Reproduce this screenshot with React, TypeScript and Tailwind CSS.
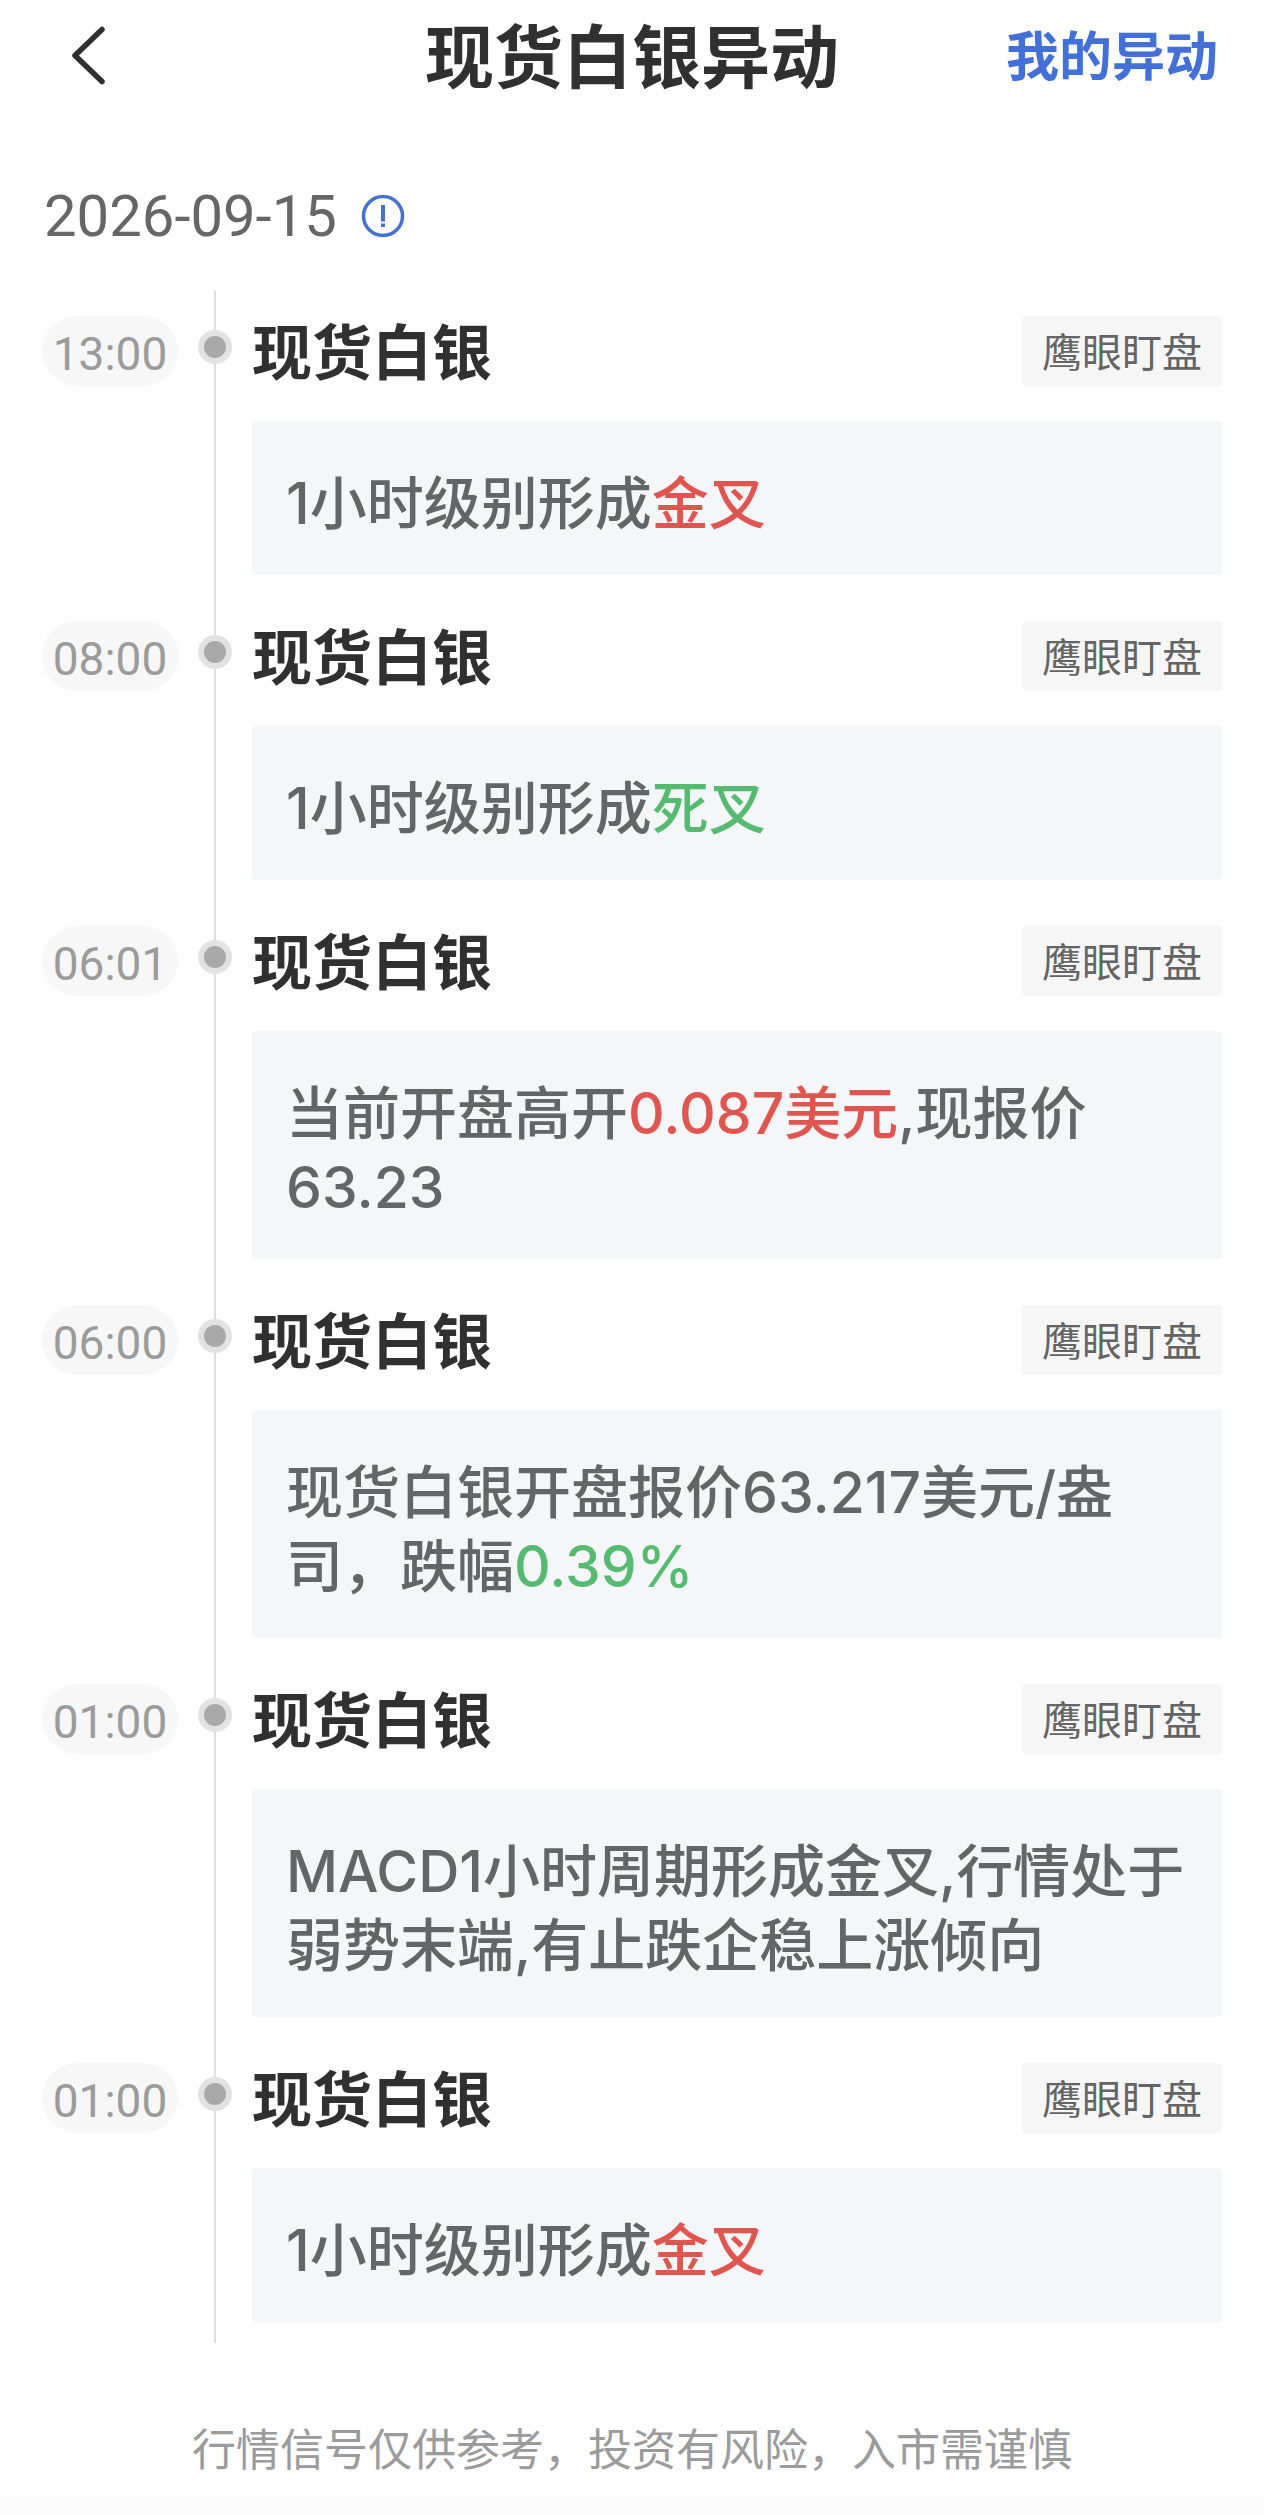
import React from 'react';

type Tone = 'up' | 'down';

interface Part {
  text: string;
  tone?: Tone;
}

interface Signal {
  time: string;
  name: string;
  tag: string;
  parts: Part[];
}

const SIGNALS: Signal[] = [
  { time: '13:00', name: '现货白银', tag: '鹰眼盯盘', parts: [{ text: '1小时级别形成' }, { text: '金叉', tone: 'up' }] },
  { time: '08:00', name: '现货白银', tag: '鹰眼盯盘', parts: [{ text: '1小时级别形成' }, { text: '死叉', tone: 'down' }] },
  {
    time: '06:01',
    name: '现货白银',
    tag: '鹰眼盯盘',
    parts: [{ text: '当前开盘高开' }, { text: '0.087美元', tone: 'up' }, { text: ',现报价63.23' }],
  },
  {
    time: '06:00',
    name: '现货白银',
    tag: '鹰眼盯盘',
    parts: [{ text: '现货白银开盘报价63.217美元/盎司，跌幅' }, { text: '0.39%', tone: 'down' }],
  },
  {
    time: '01:00',
    name: '现货白银',
    tag: '鹰眼盯盘',
    parts: [{ text: 'MACD1小时周期形成金叉,行情处于弱势末端,有止跌企稳上涨倾向' }],
  },
  { time: '01:00', name: '现货白银', tag: '鹰眼盯盘', parts: [{ text: '1小时级别形成' }, { text: '金叉', tone: 'up' }] },
];

const TONES: Record<Tone, string> = {
  up: 'text-[#df554f]',
  down: 'text-[#56bb70]',
};

function Header() {
  return (
    <header className="grid grid-cols-[1fr_auto_1fr] items-center h-[112px] px-[46px]">
      <button type="button" aria-label="返回" className="justify-self-start px-[20px]">
        <svg width="44" height="60" viewBox="0 0 44 60" fill="none" stroke="#303030" strokeWidth="5.5" strokeLinecap="round" strokeLinejoin="round">
          <path d="M36 3.5 L9 29.5 L36 55.5" />
        </svg>
      </button>
      <h1 className="pt-[8px] text-[69px] leading-[80px] font-bold text-[#303030]">现货白银异动</h1>
      <a href="#mine" className="justify-self-end pt-[4px] text-[53px] leading-[80px] font-bold text-[#4370d8]">
        我的异动
      </a>
    </header>
  );
}

function DateBar() {
  return (
    <div className="flex items-center gap-[24px] h-[179px] pl-[44px] pt-[28px]">
      <time dateTime="2026-09-15" className="text-[58px] leading-[64px] text-[#666]">
        2026-09-15
      </time>
      <button type="button" aria-label="说明">
        <svg width="44" height="44" viewBox="0 0 44 44" fill="none" stroke="#4472cc">
          <circle cx="22" cy="22" r="19.5" strokeWidth="3.5" />
          <path d="M22 11 V27.5" strokeWidth="4" />
          <path d="M22 29.5 V33" strokeWidth="4" />
        </svg>
      </button>
    </div>
  );
}

function SignalItem({ signal }: { signal: Signal }) {
  return (
    <li className="flex gap-[20px]">
      <div className="pt-[25px] shrink-0">
        <time className="flex items-center justify-center w-[136px] h-[70px] pt-[6px] rounded-full bg-[#f7f7f7] text-[46px] leading-[54px] text-[#9b9b9b]">
          {signal.time}
        </time>
      </div>

      {/* rail with the node on top of it */}
      <div className="relative flex justify-center w-[34px] shrink-0">
        <div className="w-[2px] bg-[#e0e0e0]" />
        <div className="absolute top-[39px] left-0 w-[34px] h-[34px] rounded-full border-[6px] border-[#e2e2e2] bg-[#a9a9a9]" />
      </div>

      <div className="flex-1 min-w-0 pt-[25px] pb-[21px]">
        <div className="flex items-center justify-between h-[70px]">
          <h2 className="pt-[8px] text-[60px] leading-[70px] font-bold text-[#303030]">{signal.name}</h2>
          <span className="px-[20px] pt-[6px] rounded-[4px] bg-[#f6f6f6] text-[40px] leading-[64px] text-[#646464]">{signal.tag}</span>
        </div>
        <p className="mt-[35px] px-[34px] pt-[46px] pb-[34px] rounded-[4px] bg-[#f5f6f8] font-[Inter,'Noto_Sans_CJK_SC',sans-serif] text-[57px] leading-[74px] font-medium text-[#646567]">
          {signal.parts.map((part, i) => (
            <span key={i} className={part.tone && TONES[part.tone]}>
              {part.text}
            </span>
          ))}
        </p>
      </div>
    </li>
  );
}

export default function App() {
  return (
    <div lang="zh-CN" className="min-h-screen flex flex-col bg-[#fefefe] font-[Roboto,'Noto_Sans_CJK_SC',sans-serif]">
      <Header />
      <main>
        <DateBar />
        <ul className="px-[42px]">
          {SIGNALS.map((signal, i) => (
            <SignalItem key={i} signal={signal} />
          ))}
        </ul>
      </main>
      <footer className="mt-auto">
        <p className="pb-[12px] text-center text-[44px] leading-[64px] text-[#9b9b9b]">行情信号仅供参考，投资有风险，入市需谨慎</p>
        <div className="h-[20px] bg-[#fbfbfb]" />
      </footer>
    </div>
  );
}
